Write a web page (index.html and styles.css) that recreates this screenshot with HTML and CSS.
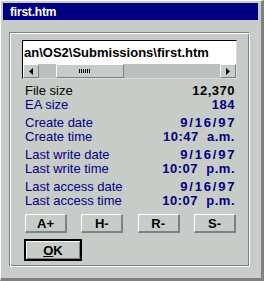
FILE: index.html
```html
<!DOCTYPE html>
<html lang="en">
<head>
    <meta charset="UTF-8">
    <title>first.htm</title>
    <link rel="stylesheet" href="styles.css">
</head>
<body>
<div class="window">
  <div class="titlebar">first.htm</div>
  <div class="groove">
    <div class="entry">
      <div class="entry-text">an\OS2\Submissions\first.htm</div>
      <div class="hscroll">
        <div class="sbtn">
          <svg width="4" height="7" viewBox="0 0 4 7"><path d="M4 0V7L0 3.5Z" fill="#000"/></svg>
        </div>
        <div class="track">
          <div class="thumb"><span class="grip"></span></div>
        </div>
        <div class="sbtn">
          <svg width="4" height="7" viewBox="0 0 4 7"><path d="M0 0V7L4 3.5Z" fill="#000"/></svg>
        </div>
      </div>
    </div>

    <div class="info">
      <div class="group">
        <div class="row black"><span>File size</span><span class="val">12,370</span></div>
        <div class="row"><span>EA size</span><span class="val">184</span></div>
      </div>
      <div class="group">
        <div class="row"><span>Create date</span><span class="val date">9/16/97</span></div>
        <div class="row"><span>Create time</span><span class="val">10:47&nbsp; a.m.</span></div>
      </div>
      <div class="group">
        <div class="row"><span>Last write date</span><span class="val date">9/16/97</span></div>
        <div class="row"><span>Last write time</span><span class="val">10:07&nbsp; p.m.</span></div>
      </div>
      <div class="group">
        <div class="row"><span>Last access date</span><span class="val date">9/16/97</span></div>
        <div class="row"><span>Last access time</span><span class="val">10:07&nbsp; p.m.</span></div>
      </div>
    </div>

    <div class="attrs">
      <button class="attr">A+</button>
      <button class="attr">H-</button>
      <button class="attr">R-</button>
      <button class="attr">S-</button>
    </div>

    <button class="ok"><u>O</u>K</button>
  </div>
</div>
</body>
</html>
```

FILE: styles.css
```css
body {
  margin: 0;
  background: #c8ccc8;
  font-family: "Liberation Sans", Arial, sans-serif;
}

.window {
  width: 264px;
  height: 281px;
  box-sizing: border-box;
  background: #c8ccc8;
  border-top: 1px solid #fff;
  border-left: 1px solid #fff;
  border-right: 3px solid #808080;
  border-bottom: 3px solid #808080;
  padding: 2px 3px 0 2px;
}

.titlebar {
  height: 17px;
  background: #000080;
  color: #fff;
  font-weight: bold;
  font-size: 12px;
  letter-spacing: -0.2px;
  line-height: 18px;
  padding-left: 7px;
}

.groove {
  margin: 12px 0 0 6px;
  width: 241px;
  height: 235px;
  box-sizing: border-box;
  border: 1px solid;
  border-color: #808080 #fff #fff #808080;
  box-shadow: inset 1px 1px #fff, inset -1px -1px #808080;
  padding: 7px 11px 0 12px;
}

.entry {
  width: 215px;
  border-top: 1px solid #000;
  border-left: 1px solid #000;
  border-right: 1px solid #dcdcdc;
  border-bottom: 1px solid #dcdcdc;
  box-sizing: border-box;
}

.entry-text {
  background: #fff;
  height: 23px;
  line-height: 23px;
  font-size: 13px;
  font-weight: bold;
  padding-left: 1px;
  white-space: nowrap;
  overflow: hidden;
}

.hscroll {
  display: flex;
  height: 14px;
  background: #bcc0bc;
}

.sbtn {
  width: 16px;
  box-sizing: border-box;
  background: #c8ccc8;
  border-top: 1px solid #fff;
  border-left: 1px solid #fff;
  border-right: 1px solid #808080;
  border-bottom: 1px solid #808080;
  display: flex;
  align-items: center;
  justify-content: center;
}

.track {
  flex: 1;
  display: flex;
}

.thumb {
  margin-left: 17px;
  width: 68px;
  box-sizing: border-box;
  background: #c8ccc8;
  border-top: 1px solid #fff;
  border-left: 1px solid #fff;
  border-right: 1px solid #808080;
  border-bottom: 1px solid #808080;
  display: flex;
  align-items: center;
  justify-content: center;
}

.grip {
  width: 11px;
  height: 4px;
  background: repeating-linear-gradient(90deg, #000 0 1px, transparent 1px 2px);
  margin-right: 12px;
}

.info {
  margin-top: 5px;
  padding: 0 3px;
  display: flex;
  flex-direction: column;
  gap: 4px;
}

.row {
  display: flex;
  justify-content: space-between;
  height: 14px;
  line-height: 14px;
  font-size: 13px;
  color: #000080;
}

.row.black {
  color: #000;
}

.val {
  font-weight: bold;
  letter-spacing: 0.5px;
}

.val.date {
  letter-spacing: 1.8px;
  margin-right: -1.3px;
}

.attrs {
  display: flex;
  justify-content: space-between;
  margin-top: 6px;
  padding: 0 2px 0 3px;
}

.attr {
  width: 42px;
  height: 19px;
  padding: 0;
  background: #c8ccc8;
  border: none;
  border-top: 1px solid #fff;
  border-left: 1px solid #fff;
  border-right: 2px solid #808080;
  border-bottom: 2px solid #808080;
  font-family: "Liberation Sans", Arial, sans-serif;
  font-size: 13px;
  font-weight: bold;
  color: #000;
}

.ok {
  display: block;
  margin: 6px 0 0 2px;
  width: 58px;
  height: 22px;
  padding: 0;
  background: #c8ccc8;
  border: 2px solid #000;
  box-shadow: inset 1px 1px #fff, inset -1px -1px #808080;
  font-family: "Liberation Sans", Arial, sans-serif;
  font-size: 13px;
  font-weight: bold;
  color: #000;
}
```
